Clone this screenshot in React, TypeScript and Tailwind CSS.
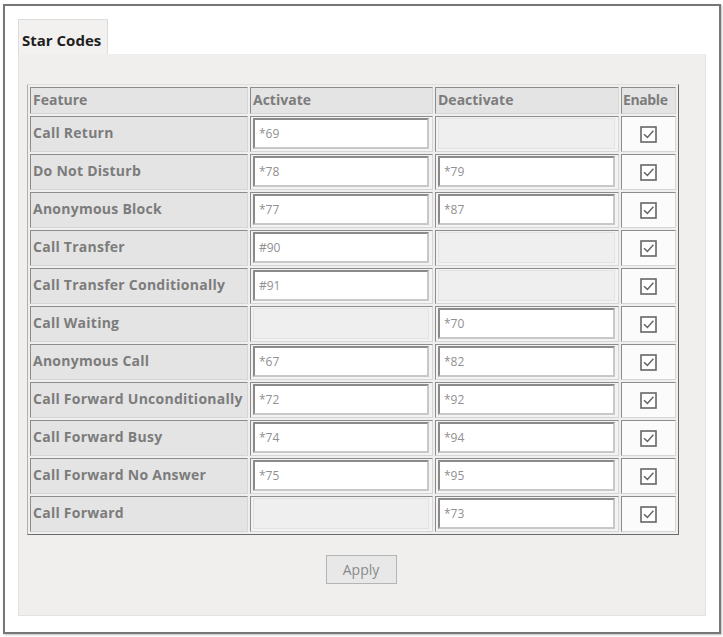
import React from "react";

type Row = {
  name: string;
  activate: string | null;
  deactivate: string | null;
};

const rows: Row[] = [
  { name: "Call Return", activate: "*69", deactivate: null },
  { name: "Do Not Disturb", activate: "*78", deactivate: "*79" },
  { name: "Anonymous Block", activate: "*77", deactivate: "*87" },
  { name: "Call Transfer", activate: "#90", deactivate: null },
  { name: "Call Transfer Conditionally", activate: "#91", deactivate: null },
  { name: "Call Waiting", activate: null, deactivate: "*70" },
  { name: "Anonymous Call", activate: "*67", deactivate: "*82" },
  { name: "Call Forward Unconditionally", activate: "*72", deactivate: "*92" },
  { name: "Call Forward Busy", activate: "*74", deactivate: "*94" },
  { name: "Call Forward No Answer", activate: "*75", deactivate: "*95" },
  { name: "Call Forward", activate: null, deactivate: "*73" },
];

const font = { fontFamily: '"Open Sans", "Noto Sans", sans-serif' };

// inset cell border like an old html table
const cell =
  "border border-t-[#8c8c8c] border-l-[#8c8c8c] border-b-[#d6d6d6] border-r-[#d6d6d6]";

const CodeInput = ({ value }: { value: string | null }) =>
  value === null ? (
    <div className="mt-[1px] ml-[2px] mr-[3px] h-[31px] bg-[#efefef] border border-[#e2e2e2]" />
  ) : (
    <div className="mt-[1px] ml-[2px] mr-[3px] h-[31px] bg-white border-2 border-t-[#8a8a8a] border-l-[#8a8a8a] border-b-[#c8c8c8] border-r-[#c8c8c8] flex items-center pl-[4px] text-[12px] text-[#909090]">
      {value}
    </div>
  );

const CheckBox = () => (
  <svg width="17" height="17" viewBox="0 0 17 17">
    <rect x="1" y="1" width="15" height="15" fill="white" stroke="#666" strokeWidth="1.6" />
    <path d="M4 8.2 L7.4 11.4 L13.4 4.8" fill="none" stroke="#666" strokeWidth="1.5" />
  </svg>
);

export default function App() {
  return (
    <div className="w-[723px] h-[637px] bg-white pt-[4px] pl-[3px]" style={font}>
      <div className="w-[718px] h-[630px] border-2 border-[#767676] shadow-[1px_1px_2px_rgba(0,0,0,0.25)] bg-white pt-[13px] pl-[13px]">
        {/* tab */}
        <div className="flex">
          <div className="w-[90px] h-[35px] bg-[#f2f1ef] border border-b-0 border-[#dcdcdc] flex items-end pb-[3px] pl-[3px] text-[15px] font-bold text-[#1e1e1e] tracking-[0px]">
            Star Codes
          </div>
        </div>

        {/* panel */}
        <div className="w-[688px] h-[562px] bg-[#f1efed] border border-t-0 border-[#e4e2e0] pt-[30px] pl-[8px] flex flex-col">
          <div className="w-[652px] bg-[#f1efed] border border-t-[#e0e0e0] border-l-[#b0b0b0] border-b-[#6a6a6a] border-r-[#6a6a6a] p-[2px]">
            <div className="grid grid-cols-[218px_183px_184px_55px] gap-[2px] text-[14px] font-bold text-[#7c7c7c]">
              <div className={`${cell} h-[27px] bg-[#e4e4e4] flex items-center pl-[2px] pb-[2px]`}>Feature</div>
              <div className={`${cell} h-[27px] bg-[#e4e4e4] flex items-center pl-[2px] pb-[2px]`}>Activate</div>
              <div className={`${cell} h-[27px] bg-[#e4e4e4] flex items-center pl-[2px] pb-[2px]`}>Deactivate</div>
              <div className={`${cell} h-[27px] bg-[#e4e4e4] flex items-center pl-[1px] pb-[2px] tracking-[-0.4px]`}>Enable</div>

              {rows.map((r) => (
                <React.Fragment key={r.name}>
                  <div className={`${cell} h-[36px] bg-[#e4e4e4] flex items-center pl-[2px] pb-[3px] whitespace-nowrap tracking-[0.25px]`}>
                    {r.name}
                  </div>
                  <div className={`${cell} h-[36px] bg-[#f3f3f3] font-normal`}>
                    <CodeInput value={r.activate} />
                  </div>
                  <div className={`${cell} h-[36px] bg-[#f3f3f3] font-normal`}>
                    <CodeInput value={r.deactivate} />
                  </div>
                  <div className={`${cell} h-[36px] bg-[#fbfbfb] flex items-center justify-center`}>
                    <CheckBox />
                  </div>
                </React.Fragment>
              ))}
            </div>
          </div>

          <div className="flex justify-center pr-[10px] mt-[20px]">
            <button className="w-[71px] h-[29px] bg-[#e8e8e8] border border-[#b4b4b4] text-[14px] text-[#8a8a8a]">
              Apply
            </button>
          </div>
        </div>
      </div>
    </div>
  );
}
